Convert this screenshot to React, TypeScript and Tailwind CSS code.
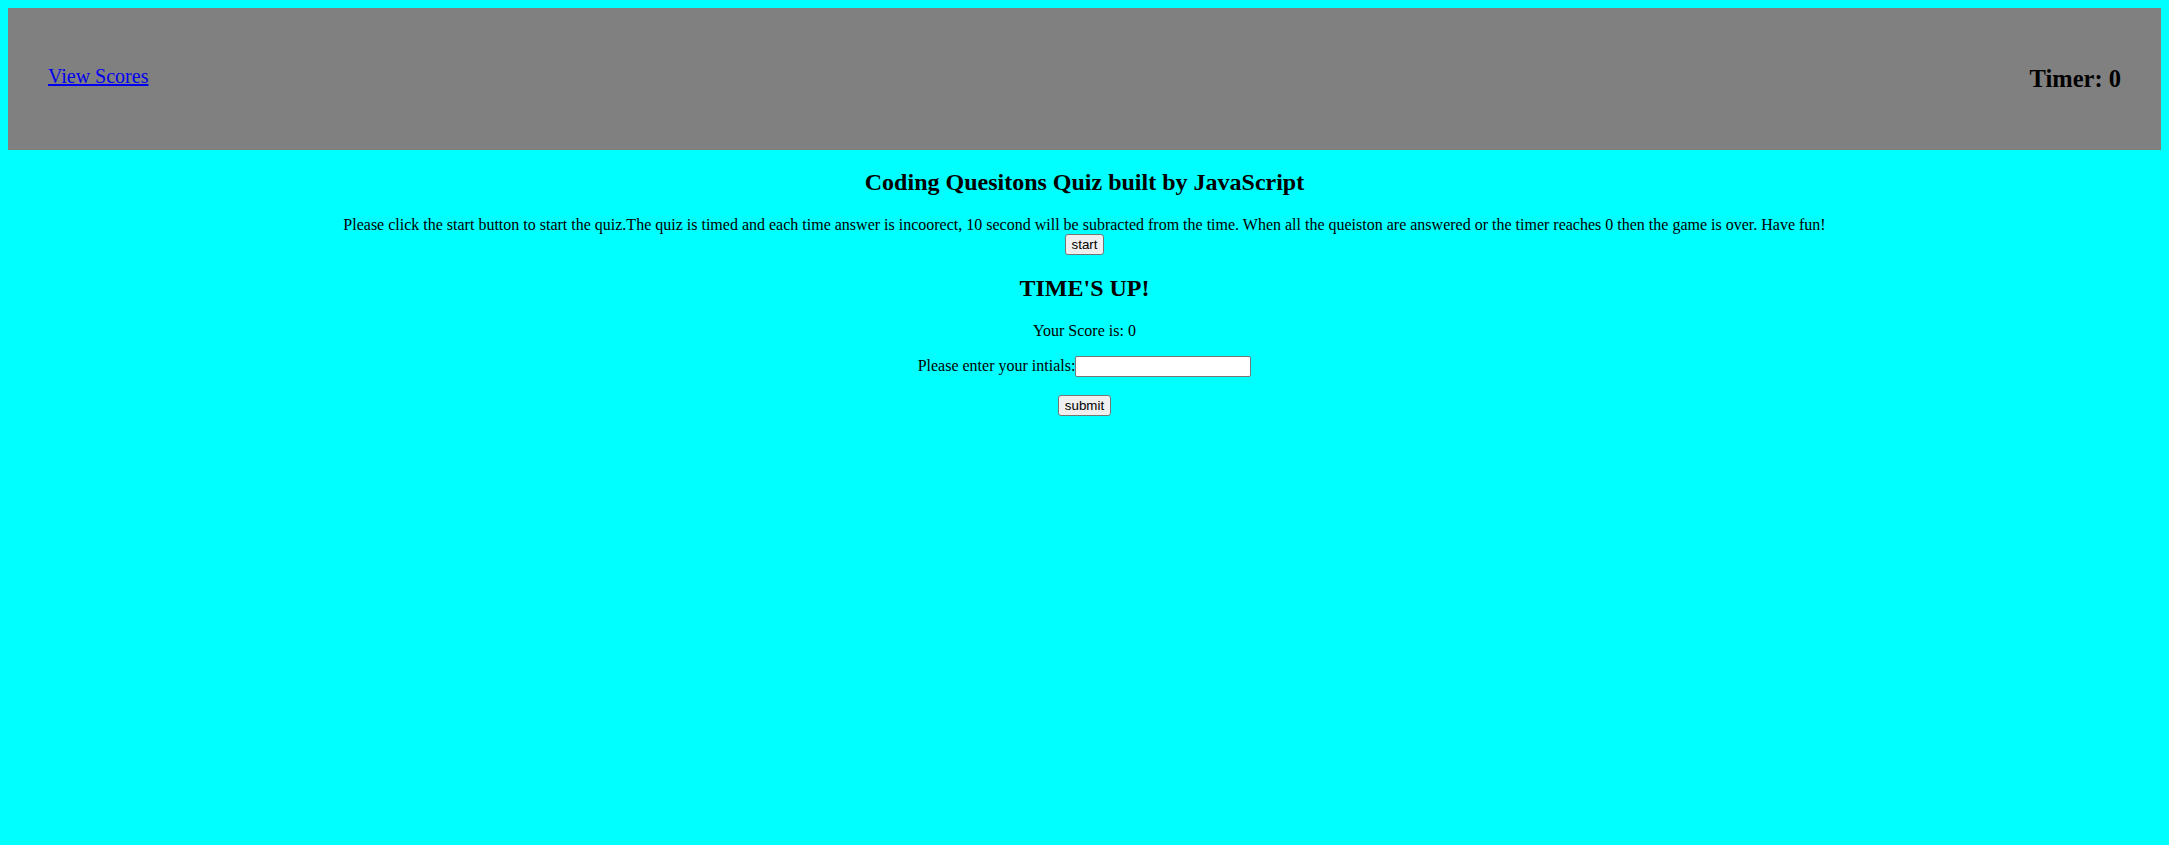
export default function App() {
  return (
    <div className="min-h-screen bg-[#00ffff] p-2 font-['Liberation_Serif','Times_New_Roman',serif] text-[16px] leading-[normal] text-black">
      {/* Top bar */}
      <header className="flex h-[142px] items-center justify-between bg-[#808080] px-10">
        <a href="#" className="mb-[5px] text-[20px] text-[#0000ee] underline">
          View Scores
        </a>
        <h2 className="text-[24.5px] font-bold">Timer: 0</h2>
      </header>

      {/* Intro */}
      <main className="text-center">
        <h2 className="mt-[19.2px] mb-[19.92px] text-[24px] font-bold">Coding Quesitons Quiz built by JavaScript</h2>
        <div>
          Please click the start button to start the quiz.The quiz is timed and each time answer is incoorect, 10 second
          will be subracted from the time. When all the queiston are answered or the timer reaches 0 then the game is
          over. Have fun!
          <br />
          <button className="rounded-[3px] border border-[#767676] bg-[#efefef] px-[6px] py-[2px] font-['Liberation_Sans',Arial,sans-serif] text-[13.33px] leading-[normal] text-black">
            start
          </button>
        </div>

        {/* Result */}
        <section>
          <h2 className="my-[19.92px] text-[24px] font-bold">TIME'S UP!</h2>
          <p className="my-4">Your Score is: 0</p>
          <p className="mt-4 mb-[18px]">
            Please enter your intials:
            <input
              type="text"
              className="h-[21px] w-[176px] rounded-[2px] border border-[#767676] bg-white px-[2px] align-baseline font-['Liberation_Sans',Arial,sans-serif] text-[13.33px]"
            />
          </p>
          <p className="my-4">
            <button className="rounded-[3px] border border-[#767676] bg-[#efefef] px-[6px] py-[2px] font-['Liberation_Sans',Arial,sans-serif] text-[13.33px] leading-[normal] text-black">
              submit
            </button>
          </p>
        </section>
      </main>
    </div>
  );
}
